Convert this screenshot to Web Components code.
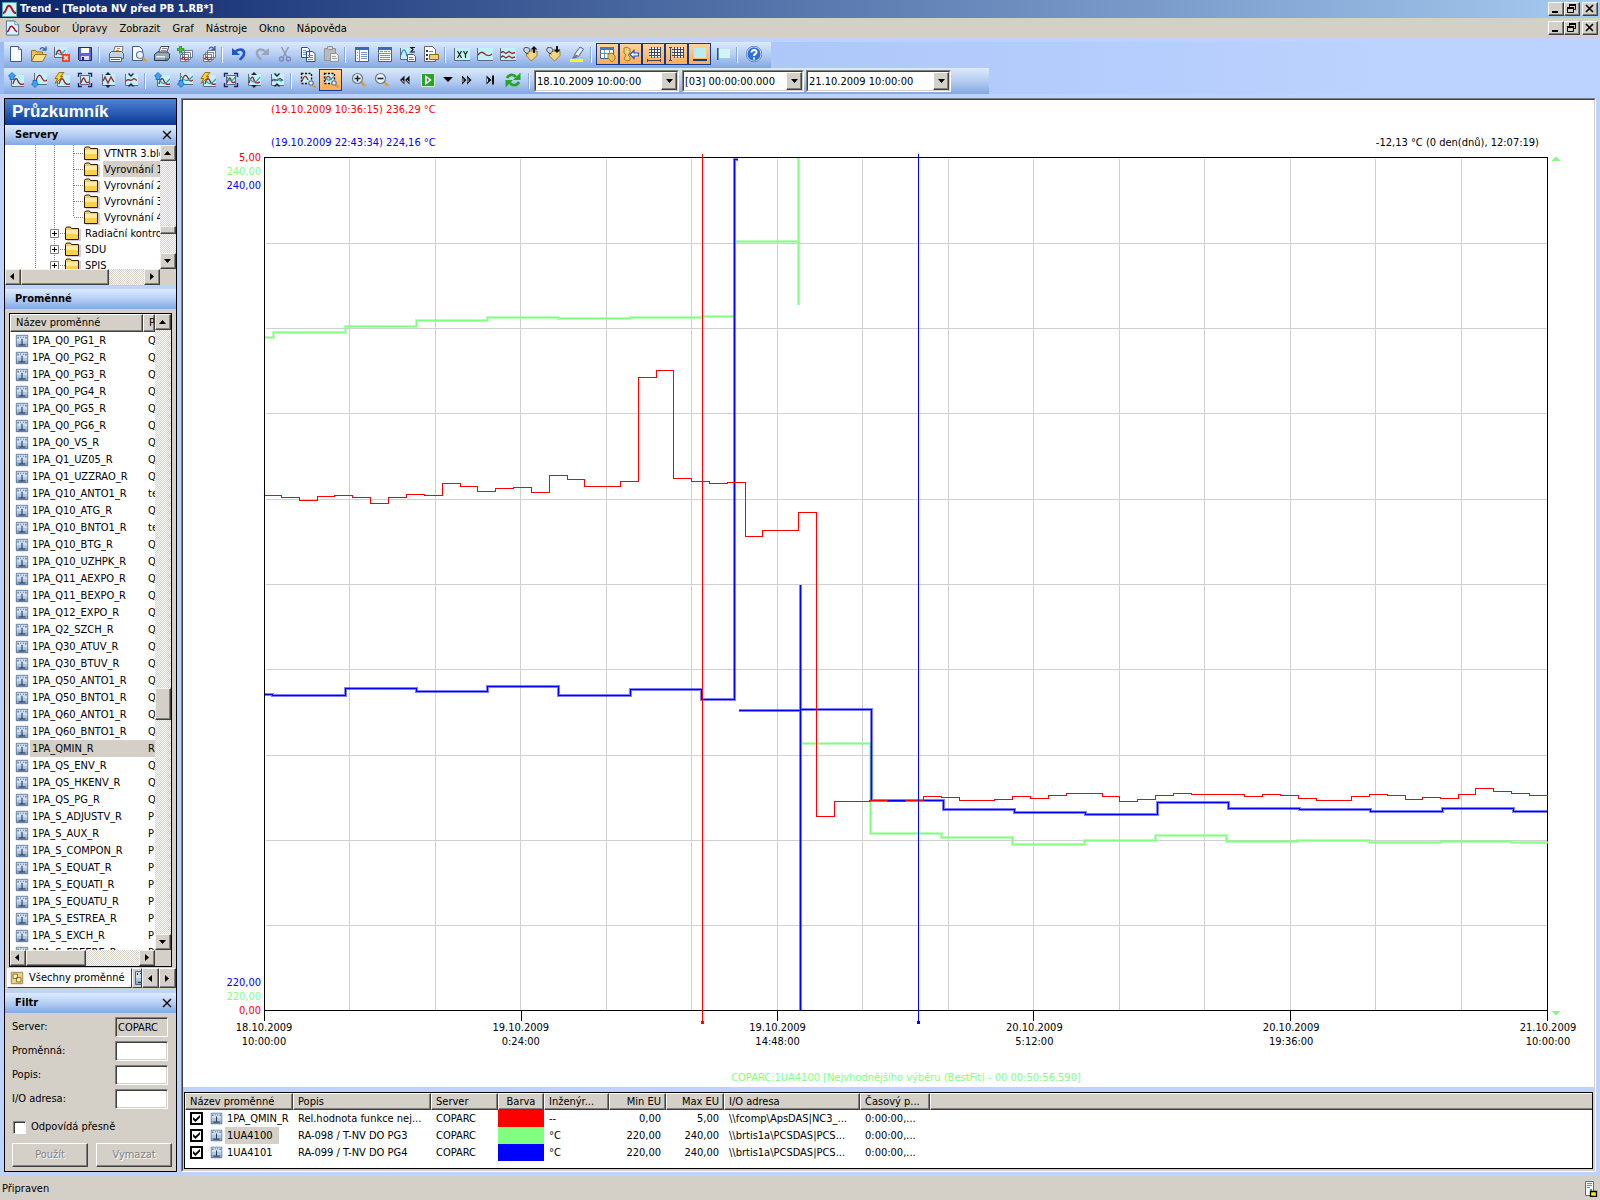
<!DOCTYPE html>
<html lang="cs">
<head>
<meta charset="utf-8">
<title>Trend - [Teplota NV před PB 1.RB*]</title>
<style>
html, body { margin: 0; height: 100%; }
body {
  --face: #d4d0c8; --sky: #bdd3ff;
  background: #bdd3ff; color: #000;
  font: 11px/14px "DejaVu Sans Condensed", "Noto Sans", sans-serif;
}
</style>
</head>
<body>
<trend-app></trend-app>
<script>
const BASE = `
  *, *::before, *::after { box-sizing: border-box; }
  button, input, select { font: inherit; color: inherit; margin: 0; padding: 0; border-radius: 0; }
  button { cursor: default; }
  svg { display: block; }
`;
function define(name, css, html) {
  customElements.define(name, class extends HTMLElement {
    connectedCallback() {
      if (this.shadowRoot) return;
      const root = this.attachShadow({ mode: 'open' });
      root.innerHTML = '<style>' + BASE + css + '</style>' + (typeof html === 'function' ? html(this) : html);
    }
  });
}

/* ---------- icons ---------- */
const pane = (x, y, w, h) => `<path fill="#bff3f6" d="M${x} ${y}h${w}v${h}h-${w}z"/><path fill="none" stroke="#5c6c7c" d="M${x + .5} ${y}v${h - .5}h${w - .5}"/>`;
const red = d => `<path fill="none" stroke="#a02838" stroke-width="1.4" d="${d}"/>`;
const teal = d => `<path fill="none" stroke="#3a9aa5" stroke-width="1.3" d="${d}"/>`;
const curve = 'M5 12c2-7 4-6 5-3s3 4 6 3';
const diamondUp = '<path fill="#3ea2ff" stroke="#1560c0" stroke-width=".8" d="M4 .5L7.500 4 6 4.500V7.500H2V4.500L.5 4z"/>';
const diamondDn = '<path fill="#3ea2ff" stroke="#1560c0" stroke-width=".8" d="M4 15.500L7.500 12 6 11.500V8.500H2V11.500L.5 12z"/>';
const bolt = '<path fill="#ffd21c" stroke="#8a5a00" stroke-width=".8" d="M5 .5h5L6.500 4.500H9L1 11.500 3.500 6.500H1z"/>';
const corners = '<path fill="none" stroke="#1c2560" stroke-width="1.400" d="M1.500 5V1.500H5M11 1.500h3.500V5M14.500 11v3.500H11M5 14.500H1.500V11"/>';
const arrowsOut = '<path fill="#1c2540" d="M8 0l3 3H5zM8 16l-3-3h6z"/>';
const arrowsIn = '<path fill="#1c2540" d="M8 5L5 2l1-1 2 2 2-2 1 1zM8 11l-3 3 1 1 2-2 2 2 1-1z"/>';
const sheet = (x, y, w, h) => `<path fill="#fff" stroke="#3c5f98" d="M${x}.5 ${y}.5h${w}v${h}h-${w}z"/>`;
const lens = (x, y, r) => `<path stroke="#d8a040" stroke-width="2.600" d="M${x + r * .7} ${y + r * .7}l4 4"/><circle cx="${x}" cy="${y}" r="${r}" fill="#e8f4fc" stroke="#6b7890" stroke-width="1.200"/>`;
const tag = '<path fill="#f4d47c" stroke="#8d6716" stroke-width=".8" d="M3.500 7.500l4-2.500h6.500v4.500l-5.500 5.500-5-5z"/><path fill="none" stroke="#4c3c18" d="M5.500 8C-.5 6.500-.5 1 3.500 1.500S7 4 6 6"/>';
const dashed = '<path fill="none" stroke="#000" stroke-dasharray="2 1.500" stroke-width="1.300" d="M1.500 1.500h10v10h-10z"/>';
const grid = '<g shape-rendering="crispEdges"><path fill="#f4f6fa" d="M4 2h10v9H4z"/><path fill="none" stroke="#3c4860" d="M5.500 1v11M8.500 1v11M11.500 1v11M3 3.500h12M3 6.500h12M3 9.500h12M14.500 1v11"/></g>';
const miniStack = '<path fill="#fff" stroke="#607088" stroke-width=".9" d="M7.500 4.500h8v7h-8zM5.500 6.500h8v7h-8zM3.500 8.500h8v7h-8z"/>' + red('M4.500 13.500c1-3 3-3 3-1s2 2 3 0');
const ICON = {
  app: '<path fill="#c9f3f6" stroke="#5aa" d="M.5.5h15v15H.5z"/><path fill="none" stroke="#b01020" stroke-width="2" d="M1 12C5 12 4 4 7.500 4S10 11 15 12"/>',
  doc: '<path fill="#d8f6fa" stroke="#4a6a9c" d="M1.500.5h9l4 4v11h-13z"/><path fill="#fff" stroke="#4a6a9c" stroke-width=".8" d="M10.500.5v4h4"/><path fill="none" stroke="#b01020" stroke-width="1.600" d="M2 12C5 12 4 6 7 6s2 5 6 6"/>',
  new: '<path fill="#f7fbff" stroke="#3c5a8c" d="M2.500.5h8l3 3v12h-11z"/><path fill="#cfe0f5" stroke="#3c5a8c" stroke-width=".8" d="M10.500.5v3h3"/>',
  open: '<path fill="#f2c44c" stroke="#8d6716" stroke-width=".9" d="M.5 15V4.500h4l1 1.500h6V9"/><path fill="#ffe08a" stroke="#8d6716" stroke-width=".9" d="M.5 15.500L4 8.500h11.500l-4 7z"/><path fill="none" stroke="#3a5f9c" stroke-width="1.300" d="M9 3.500C10 1 12 1 14 3M15 .5V4h-3.500"/>',
  closeChart: pane(0, 1, 13, 11) + red('M2 9c2-6 4-6 5-2s3 2 5 1') + teal('M2 5c3 5 6 4 9-1') + '<path fill="#e8432c" d="M8 8h8v8H8z"/><path stroke="#fff" stroke-width="1.400" d="M10 10l4 4M14 10l-4 4"/>',
  save: '<path fill="#6068d0" stroke="#23286e" d="M1.500 1.500h13v13h-12l-1-1z"/><path fill="#fff" d="M4 2h8v5H4z"/><path fill="#d6d9f2" d="M4 10h8v4H4z"/><path fill="#23286e" d="M5 11h2v3H5z"/>',
  printSetup: '<path fill="#fff" stroke="#68788c" d="M5.500 6.500L7 .5h8l-1 6"/><path stroke="#e08030" d="M9 2.500h3M8 4.500h3"/><path fill="#c8d2de" stroke="#56657a" d="M1.500 7.500l2-2h10l2 2v5h-14z"/><path fill="#fff" stroke="#56657a" d="M1.500 11.500h12v4h-12z"/><path stroke="#56657a" d="M3 13.500h9"/>',
  preview: '<path fill="#f7fbff" stroke="#3c5a8c" d="M1.500.5h7l3 3v11h-10z"/>' + lens(9, 9, 3.5),
  print: '<path fill="#fff" stroke="#445" d="M4.500 6.500L7 .5h8l-2.500 6"/><path stroke="#889" d="M8 2.500h5M7 4.500h5"/><path fill="#98a6b8" stroke="#2c3848" d="M.5 8.500l3-2.500h10l2 2v4l-2 2.500H.5z"/><path fill="#e8eef4" d="M2 10h9v1.500H2z"/><path fill="#28b428" d="M11 12h3v2h-3z"/>',
  addStack: miniStack + '<path fill="#45c82a" stroke="#147008" stroke-width=".6" d="M2.500 0h2v2.500H7v2H4.500V7h-2V4.500H0v-2h2.500z"/>',
  stack: miniStack + '<path fill="none" stroke="#3a5f9c" stroke-width="1.300" d="M9 3C10 .5 12 .5 14 2.500M15 0v3.500h-3.500"/>',
  undo: '<path fill="none" stroke="#1f56c8" stroke-width="2.600" d="M4 6C8 2 14 3 13 8c-.5 3-3 4-4 6"/><path fill="#1f56c8" d="M1 2v7h8z"/>',
  redo: '<path fill="none" stroke="#9aa6b8" stroke-width="2.400" d="M12 6C8 2 2 3 3 8c.5 3 3 4 4 6"/><path fill="#9aa6b8" d="M15 2v7H7z"/>',
  cut: '<path fill="none" stroke="#8a96ac" stroke-width="1.400" d="M4.500 1l5.500 10M11.500 1L6 11"/><circle cx="4.500" cy="13" r="2" fill="none" stroke="#8088b4" stroke-width="1.400"/><circle cx="11.500" cy="13" r="2" fill="none" stroke="#8088b4" stroke-width="1.400"/>',
  copy: '<path fill="#fff" stroke="#28508c" d="M1.500 1.500h6l2 2v8h-8zM6.500 5.500h6l2.500 2v8H6.500z"/><path stroke="#5f8fd0" d="M3 4.500h3M3 6.500h3M3 8.500h3M8 9.500h5M8 11.500h5M8 13.500h5"/>',
  paste: '<path fill="#b8babc" stroke="#909498" d="M1.500 2.500h11v12h-11z"/><path fill="#d8dadc" stroke="#909498" d="M4.500.5h5v3h-5z"/><path fill="#eee" stroke="#909498" d="M7.500 7.500h6l2 2v6h-8z"/><path stroke="#aaa" d="M9 10.500h4M9 12.500h5"/>',
  panelLeft: sheet(1, 1, 13, 14) + '<path fill="#356ac0" d="M1 1h14v3H1z"/><path stroke="#6f94d0" d="M5.500 4v11M3 6.500h1M3 9.500h1M3 12.500h1M7 6.500h6M7 8.500h6M7 10.500h6M7 12.500h6"/>',
  panelTop: sheet(1, 1, 13, 14) + '<path fill="#356ac0" d="M1 1h14v3H1z"/><path stroke="#6f94d0" d="M1 7.500h14M3 5.500h3M7 5.500h3M11 5.500h2M3 9.500h10M3 11.500h10M3 13.500h10"/>',
  sigma: pane(0, 2, 9, 12) + '<path fill="none" stroke="#3f7fd0" stroke-width="1.300" d="M1 9c2-7 4-7 6 1"/><path fill="none" stroke="#111" stroke-width="1.200" d="M15 1.500h-4l2 2-2 2.500h4"/><path fill="#fff" stroke="#556" d="M7.500 8.500h6l2 2v5h-8z"/><path stroke="#778" d="M9 11.500h4M9 13.500h5"/>',
  docTag: '<path fill="#fff" stroke="#667" d="M1.500.5h8l3 3v12h-11z"/><path fill="#333" d="M3 4h2v2H3zM3 8h2v2H3zM3 12h2v2H3z"/><path stroke="#889" d="M6 5.500h4"/><path fill="#f0cf72" stroke="#8d6716" d="M6.500 8.500h9v5h-9z"/>',
  xy: pane(0, 2, 16, 13) + '<path fill="none" stroke="#222" stroke-width="1.200" d="M3.500 5l4 7M7.500 5l-4 7M9.500 5l2 3.500L13.500 5M11.500 8v4"/>',
  line: pane(0, 2, 16, 13) + red('M1 9c3-4 5-3 7-1s5 2 7 0'),
  lines: pane(0, 2, 16, 13) + red('M1 6.500l2-1 3 2 3-2 3 2 3-1') + red('M1 11l2-1 3 2 3-2 3 2 3-1'),
  tagUp: tag + '<path fill="#111" d="M11 0l3.500 3.500H12V7h-2V3.500H7.500z"/>',
  tagDown: tag + '<path fill="#111" d="M11 7l3.500-3.500H12V0h-2v3.500H7.500z"/>',
  marker: '<path fill="#ffff00" d="M1 13h13v3H1z"/><path fill="#e6edf8" stroke="#506088" d="M5.500 8.500L11 1l3.500 2-5 7.500z"/><path fill="#777" d="M5 9l4 2-3 1.500H3z"/>',
  gridTag: sheet(0, 1, 13, 11) + '<path fill="#4a78c0" d="M0 1h14v3H0z"/><path stroke="#6c8cc4" d="M4.500 4v8M9.500 4v8M0 7.500h13"/><path fill="#e8bf62" stroke="#8d6716" stroke-width=".8" d="M8 8l4-1 3 3v3l-3 3-4-4z"/>',
  tagArrow: '<path fill="#f0cf72" stroke="#8d6716" stroke-width=".8" d="M1 2l3-1 3 2v4L5 9l2 2v3l-3 1-3-2 2-4-2-2z"/><path fill="#eef6ff" stroke="#1f56c8" stroke-width="1.200" d="M7 8.500l4-4v2.500h4.500v3H11v2.500z"/>',
  gridX: grid + '<path fill="none" stroke="#3c4860" d="M1 14.500h14M1.500 13v3M14.500 13v3"/>',
  gridY: grid + '<path fill="none" stroke="#3c4860" d="M1.500 1v14M0 1.500h3M0 14.500h3"/>',
  bottomBar: '<path fill="#b8eef2" d="M2 2h12v10H2z"/><path fill="#1d3c72" d="M1 13h14v2H1z"/>',
  leftBar: '<path fill="#d4f4f8" d="M4 3h11v9H4z"/><path fill="#1d5c82" d="M2 2h1.500v12H2z"/>',
  help: '<circle cx="8" cy="8" r="7.300" fill="#2f70d8" stroke="#e8f0ff" stroke-width="1.300"/><circle cx="8" cy="8" r="7.800" fill="none" stroke="#1c4a9c" stroke-width=".6"/><path fill="none" stroke="#fff" stroke-width="2" d="M5.500 6.500c0-3.500 5.500-3 5 0-.3 1.500-2.500 1.500-2.500 3.500"/><path fill="#fff" d="M7 11.500h2v2H7z"/>',
  zoomIn: lens(6.5, 6.5, 5) + '<path stroke="#222" stroke-width="1.600" d="M3.500 6.500h6M6.500 3.500v6"/>',
  zoomOut: lens(6.5, 6.5, 5) + '<path stroke="#222" stroke-width="1.600" d="M3.500 6.500h6"/>',
  boxZoom: '<path fill="#c8f0f4" d="M2 2h9v9H2z"/>' + dashed + red('M2 9c2-6 4-6 6-1') + lens(11, 11, 2.2),
  boxZoom2: '<path fill="#c8f0f4" d="M2 2h9v9H2z"/>' + dashed + red('M2 9c2-6 4-6 6-1') + teal('M2 4c3 6 5 5 9 0') + lens(11, 11, 2.2),
  rewind: '<path fill="#111" d="M7.500 3.500v9L3 8zM12.500 3.500v9L8 8z"/><path stroke="#fff" stroke-width=".8" d="M5 8l2 2.500M10 8l2 2.500"/>',
  forward: '<path fill="#111" d="M3 3.500v9L7.500 8zM8 3.500v9L12.500 8z"/><path stroke="#fff" stroke-width=".8" d="M4 6.500v3.500M9 6.500v3.500"/>',
  end: '<path fill="#111" d="M4.500 3.500v9L9.500 8zM10 3.500h2v9h-2z"/><path stroke="#fff" stroke-width=".8" d="M5.500 6.500v3.500"/>',
  play: '<path fill="#2ca02c" stroke="#d8f0d8" d="M1.500 1.500h13v13h-13z"/><path fill="none" stroke="#fff" stroke-width="1.400" d="M6 4.500v7L10.500 8z"/>',
  caret: '<path fill="#000" d="M3 5h10l-5 5z"/>',
  refresh: '<path fill="none" stroke="#28a428" stroke-width="2.800" d="M2 6c2-4 7-4 9-1M14 10c-2 4-7 4-9 1"/><path fill="#28a428" d="M15.500.5v7.500H8zM.5 15.500V8H8z"/>',
  variable: '<path fill="#8fabcc" stroke="#486890" d="M1.500 1.500h13v13h-13z"/><path fill="#cfe0f2" d="M2 2h12v6H2z"/><path fill="#b0c8e2" d="M2 8h12v3H2z"/><path fill="none" stroke="#24344c" stroke-width="1.200" d="M8 5.500v6.500M4 12.500h8"/><path fill="#24344c" d="M3 3h1v2H3zM6 3h1v1H6zM9 3h1v1H9zM12 3h1v2h-1z"/>',
  allVars: '<path fill="#ead48c" stroke="#9a7f32" d="M1.500 1.500h13v13h-13z"/><path fill="#fff4cc" stroke="#8a5f10" d="M3.500 3.500h5v5h-5zM7.500 7.500h5v5h-5z"/>',
  server: '<path fill="#f4f7fa" stroke="#5c6c84" d="M2.500.5h8v14h-8z"/><path stroke="#7c8ca4" stroke-width="1.200" d="M4 2.500h5M4 4.500h5M4 6.500h3"/><path fill="#30c030" d="M7 8h2v2H7z"/><path fill="#ffe800" stroke="#000" stroke-width="1.300" d="M7.500 10.500h6v5h-6z"/>'
};
['', '2'].forEach(v => {
  const box = pane(3, 3, 13, 12), mid = pane(2, 2, 13, 12);
  const r = red(curve) + (v ? teal('M5 7c3 6 6 6 11 0') : '');
  const m = red('M3 11c2-7 4-7 5-3s4 3 6 2') + (v ? teal('M3 5c4 7 7 6 11 0') : '');
  ICON['up' + v] = box + r + diamondUp;
  ICON['down' + v] = pane(3, 1, 13, 12) + red('M5 9c2-7 4-7 6-3s3 3 5 2') + (v ? teal('M4 4c4 6 7 6 12 0') : '') + diamondDn;
  ICON['bolt' + v] = box + r + bolt;
  ICON['fit' + v] = corners + '<path fill="#c8f0f4" stroke="#5c6c7c" d="M3.500 3.500h9v9h-9z"/>' + red('M4 11c2-6 3-6 4-3s2 3 4 2') + (v ? teal('M4 5c3 5 5 5 8 0') : '');
  ICON['expand' + v] = mid + (v ? m : red('M3 9l2-4 3 6 3-6 3 5')) + arrowsOut;
  ICON['shrink' + v] = mid + red('M3 9l2-1.500 3 1 3-2 3 2') + (v ? teal('M3 7l3 2 3-2 3 2 2-1') : '') + arrowsIn;
});

define('app-icon', `:host { display: block; width: 16px; height: 16px; flex: none; } svg { width: 100%; height: 100%; }`,
  el => `<svg viewBox="0 0 16 16" aria-hidden="true">${ICON[el.getAttribute('name')] || ''}</svg>`);

/* ---------- window frame ---------- */
define('window-buttons', `
  :host { display: flex; }
  button { width: 16px; height: 14px; display: block; background: var(--face); border: 1px solid; border-color: #fff #404040 #404040 #fff; box-shadow: inset -1px -1px #808080; }
  button:last-child { margin-left: 2px; }
  svg { width: 14px; height: 12px; }
`, `
  <button aria-label="Minimalizovat"><svg viewBox="0 0 14 12"><path d="M3 8h6v2H3z"/></svg></button>
  <button aria-label="Obnovit"><svg viewBox="0 0 14 12"><path fill="none" stroke="#000" d="M4.500 4V1.500h6v5H9M2.500 4.500h6v5h-6z"/><path d="M4 1h7v2H4zM2 4h7v2H2z"/></svg></button>
  <button aria-label="Zavřít"><svg viewBox="0 0 14 12"><path stroke="#000" stroke-width="1.600" d="M3 2l7 7M10 2l-7 7"/></svg></button>
`);

define('title-bar', `
  :host { display: flex; align-items: center; height: 18px; padding: 0 2px; gap: 3px; color: #fff;
    background: linear-gradient(90deg, #0a246a, #a6caf0); font-weight: bold; }
  app-icon { width: 15px; height: 15px; }
  span { flex: 1; }
`, `<app-icon name="app"></app-icon><span><slot></slot></span><window-buttons></window-buttons>`);

define('menu-bar', `
  :host { display: flex; align-items: center; height: 20px; padding: 0 2px 0 5px; background: var(--face); }
  nav { flex: 1; display: flex; gap: 12px; padding: 1px 0 0 5px; }
  a { color: inherit; text-decoration: none; }
  app-icon { width: 15px; height: 16px; }
`, `<app-icon name="doc"></app-icon><nav>${['Soubor', 'Úpravy', 'Zobrazit', 'Graf', 'Nástroje', 'Okno', 'Nápověda'].map(t => `<a href="#">${t}</a>`).join('')}</nav><window-buttons></window-buttons>`);

/* ---------- toolbars ---------- */
define('tool-button', `
  :host { display: block; flex: none; width: 23px; padding-bottom: 2px; }
  :host([narrow]) { width: 16px; }
  button { width: 100%; height: 22px; display: grid; place-items: center; background: none; border: 1px solid transparent; overflow: hidden; }
  :host([active]) button { background: linear-gradient(#ffd49a, #ffab54); border-color: #0a3a94; }
`, el => `<button aria-label="${el.getAttribute('icon')}"><app-icon name="${el.getAttribute('icon')}"></app-icon></button>`);

define('tool-bar', `
  :host { display: flex; align-items: center; width: max-content; height: 26px; padding-right: 6px;
    background: linear-gradient(#dceafb, #b4cdf2 50%, #84a7e2); }
`, `<slot></slot>`);
define('tool-separator', `
  :host { display: block; flex: none; width: 8px; padding-left: 2px; }
  i { display: block; width: 2px; height: 16px; background: #fff; border-left: 1px solid #86a8e4; }
`, `<i></i>`);

define('combo-box', `
  :host { display: grid; flex: none; height: 22px; border: 1px solid; border-color: #808080 #fff #fff #808080; background: #fff; }
  :host > * { grid-area: 1 / 1; }
  select { appearance: none; border: 1px solid; border-color: #404040 var(--face) var(--face) #404040; background: #fff; padding: 2px 16px 0 1px; width: 100%; min-width: 0; outline: none; }
  span { justify-self: end; width: 16px; margin: 1px; pointer-events: none; display: grid; place-items: center; background: var(--face); border: 1px solid; border-color: #fff #404040 #404040 #fff; box-shadow: inset -1px -1px #808080; }
  svg { width: 7px; height: 4px; }
`, el => `<select aria-label="${el.getAttribute('label')}"><option>${el.getAttribute('value')}</option></select><span><svg viewBox="0 0 7 4"><path d="M0 0h7L3.500 4z"/></svg></span>`);

const buttons = (names, active = []) => names.map(n => n === '|' ? '<tool-separator></tool-separator>' : `<tool-button icon="${n}"${active.includes(n) ? ' active' : ''}></tool-button>`).join('');
define('tool-area', `
  :host { display: flex; flex-direction: column; padding: 4px 0 4px 4px; background: linear-gradient(90deg, #9cbaf4, #bdd3ff 90%) 0 4px / 100% 52px no-repeat; }
  .d1 { width: 145px; } .d2 { width: 122px; margin-left: 3px; } .d3 { width: 145px; margin: 0 32px 0 2px; }
  .gap { width: 5px; }
  .sep { margin-left: 2px; }
`, `
  <tool-bar>${buttons(['new', 'open', 'closeChart', 'save', '|', 'printSetup', 'preview', 'print', 'addStack', 'stack', '|', 'undo', 'redo', 'cut', 'copy', 'paste', '|', 'panelLeft', 'panelTop', 'sigma', 'docTag', '|', 'xy', 'line', 'lines', 'tagUp', 'tagDown', 'marker', '|', 'gridTag', 'tagArrow', 'gridX', 'gridY', 'bottomBar', 'leftBar', '|', 'help'], ['gridTag', 'tagArrow', 'gridX', 'gridY', 'bottomBar'])}</tool-bar>
  <tool-bar>${buttons(['up', 'down', 'bolt', 'fit', 'expand', 'shrink', '|', 'up2', 'down2', 'bolt2', 'fit2', 'expand2', 'shrink2', '|', 'boxZoom', 'boxZoom2'], ['boxZoom2'])}<span class="gap"></span>${buttons(['zoomIn', 'zoomOut', 'rewind', 'play'])}<tool-button narrow icon="caret"></tool-button>${buttons(['forward', 'end', 'refresh'])}<tool-separator class="sep"></tool-separator>
    <combo-box class="d1" label="Začátek" value="18.10.2009 10:00:00"></combo-box>
    <combo-box class="d2" label="Délka" value="[03] 00:00:00.000"></combo-box>
    <combo-box class="d3" label="Konec" value="21.10.2009 10:00:00"></combo-box>
  </tool-bar>
`);

/* ---------- scroll bar ---------- */
define('scroll-track', `
  :host { display: flex; flex: none; height: 16px; background: repeating-conic-gradient(#fff 0 25%, #d4d0c8 0 50%) 0 0 / 2px 2px; }
  :host([vertical]) { flex-direction: column; width: 16px; height: auto; }
  button, i { flex: none; width: 16px; height: 16px; background: var(--face); border: 1px solid; border-color: #f4f2ee #404040 #404040 #f4f2ee; box-shadow: inset -1px -1px #808080; display: grid; place-items: center; }
  :host([vertical]) i { width: 16px; height: var(--thumb); }
  :host(:not([vertical])) i { width: var(--thumb); }
  u { flex: var(--before) 0 0; } b { flex: var(--after) 0 0; }
  svg { width: 8px; height: 8px; }
`, el => {
  const v = el.hasAttribute('vertical');
  const [before, thumb, after] = el.getAttribute('range').split(' ');
  const a = v ? 'M0 6h7L3.500 2z' : 'M5 0v7L1 3.500z', z = v ? 'M0 2h7L3.500 6z' : 'M2 0v7l4-3.500z';
  return `<style>:host { --before: ${before}; --thumb: ${thumb}px; --after: ${after}; }</style><button aria-label="Zpět"><svg viewBox="0 0 8 8"><path d="${a}"/></svg></button><u></u><i></i><b></b><button aria-label="Vpřed"><svg viewBox="0 0 8 8"><path d="${z}"/></svg></button>`;
});

/* ---------- explorer ---------- */
define('panel-header', `
  :host { display: flex; align-items: center; height: 20px; padding: 0 4px 0 10px; font-weight: bold;
    background: linear-gradient(#dfecfe, #b5cff4 50%, #83a8e3); }
  span { flex: 1; }
  button { background: none; border: 0; width: 10px; height: 10px; }
  svg { width: 10px; height: 10px; }
`, el => `<span><slot></slot></span>${el.hasAttribute('closable') ? '<button aria-label="Zavřít"><svg viewBox="0 0 10 10"><path stroke="#000" stroke-width="1.400" d="M1 1l8 8M9 1L1 9"/></svg></button>' : ''}`);

const dots = 'fill="none" stroke="#808080" stroke-dasharray="1 1"';
const folder = x => `<path fill="#6a6aa8" opacity=".35" d="M${x + 2} 4h14v12H${x + 2}z"/><path fill="#fbd050" stroke="#2c1c00" d="M${x + .5} 14.500V3.500l1-1.500h4l1 1.500h7v11z"/><path fill="#ffec9c" d="M${x + 1} 5h12v4H${x + 1}z"/>`;
define('server-tree', `
  :host { display: grid; grid-template: minmax(0, 1fr) 16px / minmax(0, 1fr) 16px; height: 140px; background: #fff; }
  ul { margin: 0; padding: 0; list-style: none; overflow: hidden; white-space: nowrap; }
  li { display: flex; height: 16px; align-items: center; }
  li svg { flex: none; height: 16px; }
  span { padding: 2px 1px 0; }
  .sel { background: var(--face); flex: 1; }
  em { background: var(--face); }
`, () => {
  const deep = ['VTNTR 3.blo', 'Vyrovnání 1', 'Vyrovnání 2', 'Vyrovnání 3', 'Vyrovnání 4'];
  const flat = ['Radiační kontro', 'SDU', 'SPIS'];
  return `<ul role="tree">` +
    deep.map((t, i) => `<li role="treeitem"><svg width="98" viewBox="0 0 98 16"><path ${dots} d="M30.500 0v16M49.500 0v16M68.500 0v${i === 4 ? 8 : 16}M69 8.500h10"/>${folder(79)}</svg><span class="${i === 1 ? 'sel' : ''}">${t}</span></li>`).join('') +
    flat.map(t => `<li role="treeitem"><svg width="79" viewBox="0 0 79 16"><path ${dots} d="M30.500 0v16M49.500 0v16M55 8.500h6"/><path fill="#fff" stroke="#808080" d="M45.500 4.500h8v8h-8z"/><path stroke="#000" d="M47 8.500h5M49.500 6v5"/>${folder(60)}</svg><span>${t}</span></li>`).join('') +
    `</ul><scroll-track vertical range="66 8 19"></scroll-track><scroll-track range="0 88 35"></scroll-track><em></em>`;
});

const VARS = ['Q0_PG1', 'Q0_PG2', 'Q0_PG3', 'Q0_PG4', 'Q0_PG5', 'Q0_PG6', 'Q0_VS', 'Q1_UZ05', 'Q1_UZZRAO', 'Q10_ANTO1', 'Q10_ATG', 'Q10_BNTO1', 'Q10_BTG', 'Q10_UZHPK', 'Q11_AEXPO', 'Q11_BEXPO', 'Q12_EXPO', 'Q2_SZCH', 'Q30_ATUV', 'Q30_BTUV', 'Q50_ANTO1', 'Q50_BNTO1', 'Q60_ANTO1', 'Q60_BNTO1', 'QMIN', 'QS_ENV', 'QS_HKENV', 'QS_PG', 'S_ADJUSTV', 'S_AUX', 'S_COMPON', 'S_EQUAT', 'S_EQUATI', 'S_EQUATU', 'S_ESTREA', 'S_EXCH', 'S_FREERE'];
const kind = v => v === 'QMIN' ? 'R' : v === 'Q10_ANTO1' || v === 'Q10_BNTO1' ? 'te' : v[0] === 'S' ? 'P' : 'Q';
define('variable-list', `
  :host { display: grid; flex: 1 1 0; min-height: 0; grid-template: minmax(0, 1fr) 16px / minmax(0, 1fr) 16px; border: 1px solid #000; background: #fff; }
  .view { overflow: hidden; }
  table { width: 100%; table-layout: fixed; border-collapse: separate; border-spacing: 0; }
  th, td { padding: 0; font-weight: normal; text-align: left; white-space: nowrap; overflow: hidden; height: 17px; }
  th { height: 18px; background: var(--face); padding-left: 5px; border: 1px solid; border-color: #fff #404040 #404040 #fff; box-shadow: inset -1px -1px #808080; }
  td > div { display: flex; align-items: center; }
  td + td { padding-left: 5px; }
  td span { flex: 1; padding: 2px 2px 1px; height: 17px; }
  .sel span, .sel td + td { background: var(--face); }
  app-icon { width: 14px; height: 14px; margin: 0 1px 0 5px; }
  em { background: var(--face); }
`, `<div class="view"><table><colgroup><col style="width:133px"><col></colgroup><thead><tr><th>Název proměnné</th><th>P</th></tr></thead><tbody>${VARS.map(v => `<tr class="${v === 'QMIN' ? 'sel' : ''}"><td><div><app-icon name="variable"></app-icon><span>1PA_${v}_R</span></div></td><td>${kind(v)}</td></tr>`).join('')}</tbody></table></div>
  <scroll-track vertical range="358 32 214"></scroll-track><scroll-track range="0 60 53"></scroll-track><em></em>`);

define('variable-tabs', `
  :host { display: flex; flex: none; height: 21px; margin-left: 2px; align-items: flex-start; }
  button { display: flex; align-items: center; gap: 5px; border: 1px solid; border-color: #fff #404040 #404040 #fff; background: var(--face); height: 20px; flex: none; }
  .on { width: 125px; background: #fafaff; padding: 0 2px; white-space: nowrap; }
  .on app-icon { width: 14px; height: 14px; }
  .next { flex: 1; min-width: 0; overflow: hidden; padding-left: 1px; }
  .nav { width: 17px; justify-content: center; box-shadow: inset -1px -1px #808080; }
  svg { width: 5px; height: 7px; }
`, `<button class="on" role="tab"><app-icon name="allVars"></app-icon>Všechny proměnné</button><button class="next" role="tab" aria-label="Další"><app-icon name="variable"></app-icon></button>
  <button class="nav" aria-label="Vlevo"><svg viewBox="0 0 5 7"><path d="M4 0v7L0 3.500z"/></svg></button><button class="nav" aria-label="Vpravo"><svg viewBox="0 0 5 7"><path d="M0 0v7l4-3.500z"/></svg></button>`);

define('filter-form', `
  :host { display: block; background: var(--face); padding: 4px 4px 4px 7px; }
  form { display: grid; grid-template-columns: 1fr 53px; gap: 4px 0; padding-right: 4px; align-items: center; }
  input[type=text] { width: 100%; height: 20px; padding: 0 2px; border: 1px solid; border-color: #808080 #fff #fff #808080; box-shadow: inset 1px 1px #404040, inset -1px -1px #d4d0c8; background: #fff; outline: none; }
  input:disabled { background: var(--face); color: #000; }
  .check { grid-column: 1 / 3; display: flex; align-items: center; gap: 5px; height: 22px; margin-top: 3px; }
  input[type=checkbox] { appearance: none; width: 13px; height: 13px; background: #fff; border: 1px solid; border-color: #808080 #fff #fff #808080; box-shadow: inset 1px 1px #404040; margin-left: 1px; }
  .row { display: flex; gap: 8px; margin-top: 5px; }
  button { flex: 1; height: 24px; background: var(--face); border: 1px solid; border-color: #fff #404040 #404040 #fff; box-shadow: inset -1px -1px #808080; color: #808080; text-shadow: 1px 1px #fff; }
`, `<form>
    <label for="s">Server:</label><input id="s" type="text" value="COPARC" disabled>
    <label for="v">Proměnná:</label><input id="v" type="text">
    <label for="p">Popis:</label><input id="p" type="text">
    <label for="a">I/O adresa:</label><input id="a" type="text">
    <div class="check"><input id="e" type="checkbox"><label for="e">Odpovídá přesně</label></div>
  </form><div class="row"><button disabled>Použít</button><button disabled>Vymazat</button></div>`);

define('explorer-panel', `
  :host { display: flex; flex-direction: column; flex: none; width: 173px; border: 1px solid #000; background: var(--sky); }
  h1 { margin: 0; height: 26px; padding-left: 7px; font: bold 17px/25px "Liberation Sans", Arial, sans-serif; color: #fff; background: linear-gradient(#4f83d6, #0a3a94); }
  .list { display: flex; flex-direction: column; flex: 1; min-height: 0; background: var(--face); }
  variable-list { margin: 4px 4px 1px; }
  .gap { height: 4px; flex: none; }
`, `<h1>Průzkumník</h1>
  <panel-header closable>Servery</panel-header><server-tree></server-tree><div class="gap"></div>
  <panel-header>Proměnné</panel-header>
  <div class="list"><variable-list></variable-list><variable-tabs></variable-tabs></div><div class="gap"></div>
  <panel-header closable>Filtr</panel-header><filter-form></filter-form>`);

/* ---------- chart ---------- */
/* Step series: a start value, then x,y pairs; each x is where the value changes to y. */
const steps = (y0, pairs, x0 = 264, end = 1547) => {
  let d = `M${x0} ${y0}`;
  pairs.forEach(([x, y]) => { d += `H${x}V${y}`; });
  return d + `H${end}`;
};
const GREEN = steps(337, [[273, 332], [345, 326], [416, 320], [487, 317], [558, 318], [630, 317], [702, 316]], 264, 734)
  + 'M735 241H798M798 157V304' + steps(743, [[870, 833], [941, 837], [1012, 844], [1084, 840], [1155, 835], [1226, 841], [1297, 840], [1369, 842], [1440, 841], [1511, 842]], 801);
const BLUE = steps(694, [[272, 695], [345, 688], [416, 691], [487, 686], [558, 695], [630, 689], [701, 699]], 264, 734) + 'V159H737M738 710H800M800 584V1010'
  + steps(709, [[871, 800], [943, 809], [1014, 812], [1085, 814], [1157, 802], [1228, 808], [1299, 809], [1370, 811], [1442, 808], [1513, 811]], 800);
const RED = steps(495, [[281, 497], [299, 500], [317, 496], [334, 495], [352, 497], [370, 503], [388, 497], [406, 494], [424, 495], [442, 483], [460, 486], [477, 491], [495, 488], [513, 487], [531, 492], [549, 475], [567, 479], [584, 486], [602, 486], [620, 481], [638, 377], [656, 370], [673, 478], [691, 481], [709, 483], [727, 482], [745, 536], [762, 530], [798, 512], [816, 816], [834, 801], [869, 800], [887, 801], [905, 800], [923, 796], [941, 797], [959, 800], [994, 799], [1012, 796], [1030, 798], [1048, 795], [1066, 793], [1102, 796], [1119, 801], [1137, 799], [1155, 795], [1173, 793], [1191, 794], [1244, 796], [1262, 794], [1280, 795], [1298, 798], [1316, 800], [1351, 796], [1369, 794], [1387, 795], [1405, 799], [1422, 797], [1440, 798], [1458, 794], [1475, 788], [1493, 791], [1511, 793], [1529, 795]]);
const gx = Array.from({ length: 14 }, (_, i) => `M${Math.floor(264 + 1283 / 15 * (i + 1))} 158V1010`).join('');
const gy = Array.from({ length: 9 }, (_, i) => `M265 ${Math.ceil(157 + 85.3 * (i + 1))}H1547`).join('');
define('trend-chart', `
  :host { display: grid; grid-template: 57px minmax(0, 1fr) 76px / 81px minmax(0, 1fr) 46px; flex: 1; min-height: 0; background: #fff; }
  .red { color: #f00; } .green { color: #80ff80; } .blue { color: #00f; }
  header { grid-area: 1 / 2; display: flex; flex-direction: column; gap: 19px; padding: 3px 9px 0 7px; }
  header div { display: flex; justify-content: space-between; }
  .y { grid-area: 2 / 1; display: flex; flex-direction: column; justify-content: space-between; text-align: right; padding-right: 3px; margin: -6px 0 -7px; }
  .plot { grid-area: 2 / 2; contain: size layout; }
  .plot svg { width: 100%; height: 100%; overflow: visible; fill: none; shape-rendering: crispEdges; }
  .x { grid-area: 3 / 2; }
  .ticks { display: flex; justify-content: space-between; padding-top: 10px; }
  .ticks div { width: 0; display: flex; justify-content: center; text-align: center; }
  .cap { grid-area: 3 / 2; align-self: end; text-align: center; padding-bottom: 2px; }
`, `
  <header><div><span class="red">(19.10.2009 10:36:15) 236,29 °C</span></div>
  <div><span class="blue">(19.10.2009 22:43:34) 224,16 °C</span><span>-12,13 °C (0 den(dnů), 12:07:19)</span></div></header>
  <div class="y"><div><div class="red">5,00</div><div class="green">240,00</div><div class="blue">240,00</div></div>
  <div><div class="blue">220,00</div><div class="green">220,00</div><div class="red">0,00</div></div></div>
  <div class="plot"><svg viewBox="264 157 1284 854" preserveAspectRatio="none" role="img" aria-label="Trend"><g transform="translate(.5 .5)">
    <path stroke="#d0d0d0" d="${gx}${gy}"/>
    <path stroke="#000" d="M264 157H1547V1010H264Z${[264, 521, 777, 1033, 1290, 1547].map(x => `M${x} 1010v10`).join('')}"/>
    <path stroke="#80ff80" stroke-opacity=".55" stroke-width="3" d="${GREEN}"/><path stroke="#80ff80" d="${GREEN}"/>
    <path stroke="#00f" stroke-opacity=".5" stroke-width="3" d="${BLUE}"/><path stroke="#00f" d="${BLUE}"/>
    <path stroke="#f00" d="${RED}"/>
    <path stroke="#f00" d="M702 153V1023"/><path stroke="#00f" d="M918 153V1023"/></g>
    <path fill="#f00" d="M701 1021h3v3h-3z"/><path fill="#00f" d="M917 1021h3v3h-3z"/>
    <path fill="#80ff80" d="M1551 161h9l-4-4zM1551 1011h9l-4 4z"/></svg></div>
  <div class="x"><div class="ticks">${[['18.10.2009', '10:00:00'], ['19.10.2009', '0:24:00'], ['19.10.2009', '14:48:00'], ['20.10.2009', '5:12:00'], ['20.10.2009', '19:36:00'], ['21.10.2009', '10:00:00']].map(t => `<div><span>${t.join('<br>')}</span></div>`).join('')}</div></div>
  <div class="cap green">COPARC:1UA4100 [Nejvhodnějšího výběru (BestFit) - 00 00:50:56.590]</div>
`);

define('legend-table', `
  :host { display: block; flex: none; height: 77px; margin: 1px; border: 1px solid #000; background: #fff; overflow: hidden; }
  table { width: 100%; table-layout: fixed; border-collapse: separate; border-spacing: 0; }
  th, td { padding: 0 5px; height: 17px; font-weight: normal; text-align: left; white-space: nowrap; overflow: hidden; }
  th { padding: 0 4px; background: var(--face); border: 1px solid; border-color: #fff #404040 #404040 #fff; box-shadow: inset -1px -1px #808080; }
  th:last-child { border-right: 0; box-shadow: inset 0 -1px #808080; }
  .c { text-align: center; } .r { text-align: right; }
  td.first > div { display: flex; align-items: center; height: 17px; gap: 7px; }
  td.first { padding-right: 0; }
  app-icon { width: 13px; height: 13px; }
  td.first label { margin-left: -5px; height: 17px; padding: 2px 6px 1px 2px; }
  .sel label { background: var(--face); }
  input { appearance: none; width: 13px; height: 13px; border: 2px solid #000; background: #fff; flex: none; display: grid; place-items: center; }
  input:checked::before { content: ""; width: 7px; height: 7px; background: #000; clip-path: polygon(0 30%, 35% 62%, 100% 0, 100% 35%, 35% 100%, 0 65%); }
`, () => {
  const w = [108, 138, 67, 46, 65, 57, 58, 136, 70];
  const rows = [
    ['1PA_QMIN_R', 'Rel.hodnota funkce nej...', '#f00', '--', '0,00', '5,00', '\\\\fcomp\\ApsDAS|NC3_...'],
    ['1UA4100', 'RA-098 / T-NV DO PG3', '#80ff80', '°C', '220,00', '240,00', '\\\\brtis1a\\PCSDAS|PCS...'],
    ['1UA4101', 'RA-099 / T-NV DO PG4', '#00f', '°C', '220,00', '240,00', '\\\\brtis1a\\PCSDAS|PCS...']];
  return `<table><colgroup>${w.map(x => `<col style="width:${x}px">`).join('')}<col></colgroup>
  <thead><tr><th>Název proměnné</th><th>Popis</th><th>Server</th><th class="c">Barva</th><th>Inženýr...</th><th class="r">Min EU</th><th class="r">Max EU</th><th>I/O adresa</th><th>Časový p...</th><th></th></tr></thead>
  <tbody>${rows.map((r, i) => `<tr class="${i === 1 ? 'sel' : ''}"><td class="first"><div><input id="r${i}" type="checkbox" checked><app-icon name="variable"></app-icon><label for="r${i}">${r[0]}</label></div></td><td>${r[1]}</td><td>COPARC</td><td style="background:${r[2]}"></td><td>${r[3]}</td><td class="r">${r[4]}</td><td class="r">${r[5]}</td><td>${r[6]}</td><td>0:00:00,...</td><td></td></tr>`).join('')}</tbody></table>`;
});

define('document-view', `
  :host { display: flex; flex-direction: column; flex: 1; min-width: 0; background: var(--face);
    border: 1px solid; border-color: #808080 #fff #fff #808080; }
  .in { flex: 1; min-height: 0; display: flex; flex-direction: column; border: 1px solid; border-color: #404040 var(--face) var(--face) #404040; }
  .gap { height: 4px; flex: none; background: var(--sky); }
`, `<div class="in"><trend-chart></trend-chart><div class="gap"></div><legend-table></legend-table></div>`);

define('status-bar', `
  :host { display: flex; align-items: center; justify-content: space-between; height: 24px; padding: 2px 1px 0 2px; background: var(--face); }
`, `<span><slot></slot></span><app-icon name="server"></app-icon>`);

define('trend-app', `
  :host { display: flex; flex-direction: column; height: 100vh; min-height: 600px; background: var(--sky); }
  main { flex: 1; min-height: 0; display: flex; gap: 4px; padding: 0 4px 4px; }
`, `<title-bar>Trend - [Teplota NV před PB 1.RB*]</title-bar><menu-bar></menu-bar><tool-area></tool-area>
  <main><explorer-panel></explorer-panel><document-view></document-view></main>
  <status-bar>Připraven</status-bar>`);
</script>
</body>
</html>
